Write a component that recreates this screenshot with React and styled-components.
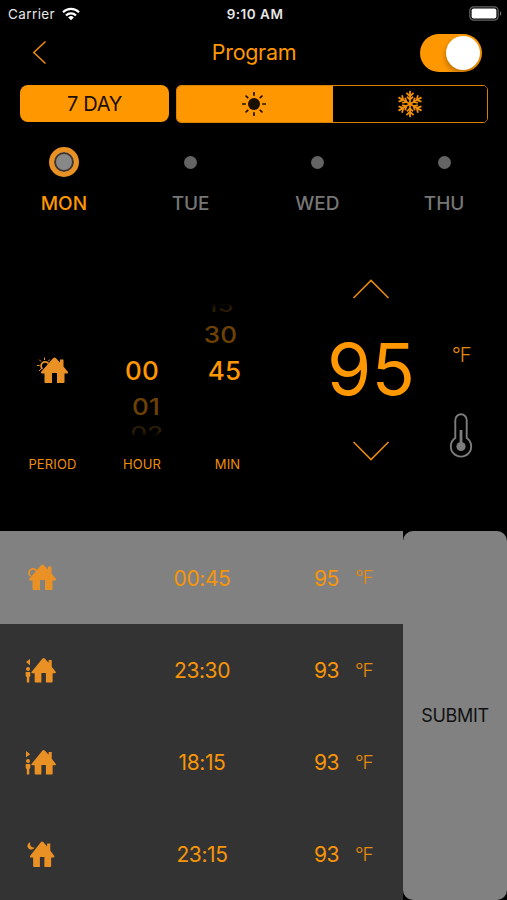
import React, { useState } from 'react';
import styled, { createGlobalStyle } from 'styled-components';

const ORANGE = '#ff9800';
const ICON = '#e99124';

const GlobalStyle = createGlobalStyle`
  * {
    box-sizing: border-box;
  }

  body {
    margin: 0;
    background-color: #000;
    font-family: Inter, sans-serif;
  }

  button {
    border: 0;
    padding: 0;
    background: none;
    font-family: inherit;
    cursor: pointer;
  }

  svg {
    display: block;
  }
`;

const Screen = styled.div`
  width: 507px;
  height: 900px;
  display: flex;
  flex-direction: column;
  overflow: hidden;
  background-color: #000;
  color: ${ORANGE};
`;

const StatusBar = styled.div`
  height: 28px;
  padding: 0 5px 0 8px;
  display: grid;
  grid-template-columns: 1fr 60px 1fr;
  align-items: center;
  color: #e6e6e6;
`;

const Carrier = styled.div`
  display: flex;
  align-items: center;
  gap: 7px;
  font-size: 13.5px;
  letter-spacing: 0.4px;
`;

const Clock = styled.div`
  font-size: 13.5px;
  font-weight: 600;
  letter-spacing: 0.5px;
  text-align: center;
  white-space: nowrap;
`;

const BatteryBox = styled.div`
  display: flex;
  justify-content: flex-end;
  padding-bottom: 2px;
`;

const Header = styled.div`
  height: 49px;
  padding: 0 25px 0 32px;
  display: grid;
  grid-template-columns: 1fr 100px 1fr;
  align-items: center;
`;

const Back = styled.button`
  justify-self: start;
  padding-bottom: 1px;
`;

const Title = styled.h1`
  margin: 0 3px 2px -3px;
  font-size: 21.5px;
  font-weight: 400;
  text-align: center;
  letter-spacing: -0.3px;
`;

const Toggle = styled.button`
  justify-self: end;
  width: 62px;
  height: 38px;
  padding: 0 2px;
  border-radius: 19px;
  display: flex;
  align-items: center;
  justify-content: ${props => props.$on ? 'flex-end' : 'flex-start'};
  background-color: ${props => props.$on ? ORANGE : '#555'};
`;

const Knob = styled.span`
  width: 34px;
  height: 34px;
  border-radius: 50%;
  background-color: #fff;
  box-shadow: -1px 3px 5px rgba(0, 0, 0, 0.25);
`;

const Modes = styled.div`
  display: flex;
  align-items: flex-start;
  gap: 7px;
  padding: 8px 19px 0 20px;
`;

const DayButton = styled.button`
  width: 149px;
  height: 37px;
  border-radius: 8px;
  background-color: ${ORANGE};
  color: #1a0f00;
  font-size: 20px;
  letter-spacing: -0.3px;
`;

const Segment = styled.div`
  flex: 1;
  height: 38px;
  display: flex;
  border: 1px solid #d98100;
  border-radius: 5px;
  overflow: hidden;
`;

const SegmentItem = styled.button`
  flex: 1;
  display: flex;
  align-items: center;
  justify-content: center;
  padding-right: ${props => props.$active ? 3 : 1}px;
  background-color: ${props => props.$active ? ORANGE : '#000'};
  color: ${props => props.$active ? '#1a0f00' : '#ef8f08'};
`;

const Days = styled.div`
  height: 97px;
  padding-top: 23px;
  display: grid;
  grid-template-columns: repeat(4, 1fr);
`;

const Day = styled.button`
  display: flex;
  flex-direction: column;
  align-items: center;
  gap: 15px;
  padding-left: 1px;
  height: 71px;
  font-size: 19px;
  line-height: 22px;
  font-weight: 500;
  letter-spacing: 0;
  color: ${props => props.$active ? ORANGE : '#777'};
`;

const DotBox = styled.span`
  height: 32px;
  display: flex;
  align-items: center;
`;

const Dot = styled.span`
  width: ${props => props.$active ? 30 : 13}px;
  height: ${props => props.$active ? 30 : 13}px;
  border-radius: 50%;
  border: ${props => props.$active ? `5px solid ${ICON}` : '0'};
  background-color: ${props => props.$active ? '#888' : '#646464'};
  box-shadow: ${props => props.$active ? 'inset 0 0 0 2px #40352a' : 'none'};
`;

const Settings = styled.div`
  height: 311px;
  padding-top: 58px;
  display: grid;
  grid-template-columns: 105px 74px 91px 54px 94px 89px;
`;

const Picker = styled.div`
  display: flex;
  flex-direction: column;
  align-items: center;
`;

const Wheel = styled.div`
  height: 162px;
  width: 100%;
  padding-top: 15px;
  display: grid;
  grid-template-rows: 23px 36px 37px 34px 17px;
  justify-items: center;
  align-items: center;
`;

const Current = styled.span`
  font-size: 26px;
  line-height: 26px;
  font-weight: 500;
  letter-spacing: 0.2px;
`;

const Near = styled(Current)`
  color: #6f4203;
  transform: translate(${props => props.$shift}px, 1px) scaleY(0.86);
`;

// last value on the wheel, fading out towards its end
const Far = styled(Current)`
  color: #2c1c07;
  transform: translate(${props => props.$shift}px, ${props => props.$top ? 1 : 2}px) scaleY(0.7);
  mask-image: linear-gradient(
    ${props => props.$top ? 'to top' : 'to bottom'},
    #000 35%,
    transparent 65%
  );
`;

const PickerLabel = styled.span`
  margin-top: 15px;
  font-size: 13px;
  line-height: 18px;
  letter-spacing: 0.15px;
  color: #ef8f08;
  transform: translateX(${props => props.$shift || 0}px);
`;

const Temperature = styled.div`
  display: flex;
  flex-direction: column;
  align-items: center;
  padding-top: 1px;
`;

const Degrees = styled.div`
  height: 142px;
  line-height: 141px;
  font-size: 71.5px;
  letter-spacing: 0;
  margin-right: 0;
`;

const UnitColumn = styled.div`
  display: flex;
  flex-direction: column;
  align-items: center;
  justify-content: space-between;
  height: 180px;
  padding: 65px 3px 0 0;
`;

const UnitText = styled.span`
  font-size: ${props => props.$size || 20}px;
  line-height: 24px;
  font-weight: 300;
  letter-spacing: -1.2px;
  color: #e58a0c;
`;

const Bottom = styled.div`
  flex: 1;
  display: flex;
`;

const List = styled.div`
  width: 403px;
  display: grid;
  grid-template-rows: 93px 92px 92px 92px;
`;

const Row = styled.div`
  padding: 1px 0 0 25px;
  display: grid;
  grid-template-columns: 32px 258px 40px 48px;
  align-items: center;
  background-color: ${props => props.$active ? '#818181' : '#333'};
  color: #f79509;
  font-size: 21px;
`;

const Time = styled.span`
  text-align: center;
  letter-spacing: -0.4px;
  padding-left: 32px;
`;

const RowTemp = styled.span`
  margin-left: -1px;
  letter-spacing: -0.6px;
`;

const Submit = styled.button`
  flex: 1;
  border-radius: 10px;
  background-color: #818181;
  color: #111;
  font-size: 18px;
  letter-spacing: -0.35px;
`;

function Wifi() {
  return (
    <svg width="18" height="14" viewBox="0 0 18 14" fill="none" stroke="#fff" strokeWidth="2.2">
      <path d="M1 5.2a11.4 11.4 0 0 1 16 0" />
      <path d="M4 8.4a7 7 0 0 1 10 0" />
      <path d="M9 13.2 6.2 10.4a4 4 0 0 1 5.6 0z" fill="#fff" stroke="none" />
    </svg>
  );
}

function Battery() {
  return (
    <svg width="33" height="15" viewBox="0 0 33 15">
      <rect x="0.8" y="0.8" width="28.4" height="13.4" rx="4" fill="none" stroke="#666" strokeWidth="1.2" />
      <rect x="2.6" y="2.6" width="24.8" height="9.8" rx="2" fill="#fff" />
      <path d="M31 5.2c1.6.6 1.6 4 0 4.6z" fill="#777" />
    </svg>
  );
}

function Sun() {
  return (
    <svg width="26" height="26" viewBox="0 0 26 26" stroke="currentColor" strokeWidth="1.7">
      <circle cx="13" cy="13" r="6" fill="currentColor" stroke="none" />
      {[0, 45, 90, 135, 180, 225, 270, 315].map(angle => (
        <path key={angle} d="M13 4.8V1" transform={`rotate(${angle} 13 13)`} />
      ))}
    </svg>
  );
}

function Snowflake() {
  return (
    <svg width="28" height="28" viewBox="0 0 28 28" fill="none" stroke="currentColor" strokeWidth="1.8">
      {[0, 60, 120, 180, 240, 300].map(angle => (
        <path key={angle} d="M14 14V.7M10.4 2.8 14 6.2 17.6 2.8M11 6.7 14 9.8 17 6.7" transform={`rotate(${angle} 14 14)`} />
      ))}
    </svg>
  );
}

function Chevron({ d, width, height }) {
  return (
    <svg width={width} height={height} viewBox={`0 0 ${width} ${height}`} fill="none" stroke="#e58a0c" strokeWidth="1.6">
      <path d={d} />
    </svg>
  );
}

function Thermometer() {
  return (
    <svg width="24" height="45" viewBox="0 0 24 45" fill="none" stroke="#7d7d7d">
      <path d="M6.3 25V7a5.7 5.7 0 0 1 11.4 0v18a10.2 10.2 0 1 1-11.4 0z" strokeWidth="1.9" />
      <path d="M12 17v17" strokeWidth="2.8" />
      <circle cx="12" cy="33.5" r="4.6" fill="#7d7d7d" stroke="none" />
    </svg>
  );
}

const HOUSE = 'M0 14.5 12 .8q1.5-1.6 3 0L19 5V2h3.5v7L27 14.5q.4 1.5-1 1.5h-2.5v8.5q0 1-1 1H16V15.5h-5v10H4.5q-1 0-1-1V16H1q-1.4 0-1-1.5z';

function HouseIcon({ kind, rays }) {
  const away = kind === 'leave' || kind === 'return';
  return (
    <svg width="32" height="28" viewBox="0 0 32 28" fill={ICON}>
      <path d={HOUSE} transform={away ? 'translate(6.5 1) scale(.9 .96)' : kind === 'sleep' ? 'translate(5 .5) scale(.9 1)' : 'translate(4 .5)'} />
      {kind === 'wake' && (
        <g fill="none" stroke={ICON}>
          <path d="M5.5 12A4.1 4.1 0 1 1 11.5 6.5" strokeWidth="1.8" />
          {rays && <path d="M7.5 3V.5M4 4.5 2.3 2.7M2.6 8.5H0M4 12 2 14M11 4.5l1.7-2" strokeWidth="1" />}
        </g>
      )}
      {away && (
        <g>
          <path d={kind === 'leave' ? 'M1 5 5 2v6.3z' : 'M5.2 5.2 1 2v6.3z'} />
          <circle cx="3" cy="12" r="2" />
          <path d="M.7 15h4.6v4.2l-1 .8v5.5H1.8V20l-1.1-.8z" />
        </g>
      )}
      {kind === 'sleep' && <path d="M5.3 1.3A3.7 3.7 0 1 0 9.5 6.5 3.8 3.8 0 0 1 5.3 1.3z" />}
    </svg>
  );
}

const days = ['MON', 'TUE', 'WED', 'THU'];

const periods = [
  { kind: 'wake', time: '00:45', temp: 95 },
  { kind: 'leave', time: '23:30', temp: 93 },
  { kind: 'return', time: '18:15', temp: 93 },
  { kind: 'sleep', time: '23:15', temp: 93 },
];

function App() {
  const [on, setOn] = useState(true);
  const [mode, setMode] = useState('heat');
  const [day, setDay] = useState('MON');
  const [temp, setTemp] = useState(95);

  return <>
    <GlobalStyle />
    <Screen>
      <StatusBar>
        <Carrier>Carrier <Wifi /></Carrier>
        <Clock>9:10 AM</Clock>
        <BatteryBox><Battery /></BatteryBox>
      </StatusBar>

      <Header>
        <Back aria-label="Back"><Chevron width={15} height={25} d="M13.5 1.5 1.8 12.5 13.5 23.5" /></Back>
        <Title>Program</Title>
        <Toggle $on={on} aria-label="Power" onClick={() => setOn(!on)}><Knob /></Toggle>
      </Header>

      <Modes>
        <DayButton>7 DAY</DayButton>
        <Segment>
          <SegmentItem $active={mode === 'heat'} aria-label="Heat" onClick={() => setMode('heat')}><Sun /></SegmentItem>
          <SegmentItem $active={mode === 'cool'} aria-label="Cool" onClick={() => setMode('cool')}><Snowflake /></SegmentItem>
        </Segment>
      </Modes>

      <Days>
        {days.map(name => (
          <Day key={name} $active={day === name} onClick={() => setDay(name)}>
            <DotBox><Dot $active={day === name} /></DotBox>
            {name}
          </Day>
        ))}
      </Days>

      <Settings>
        <Picker>
          <Wheel>
            <span />
            <span />
            <HouseIcon kind="wake" rays />
          </Wheel>
          <PickerLabel>PERIOD</PickerLabel>
        </Picker>
        <Picker>
          <Wheel>
            <span />
            <span />
            <Current>00</Current>
            <Near $shift={4}>01</Near>
            <Far $shift={5}>02</Far>
          </Wheel>
          <PickerLabel>HOUR</PickerLabel>
        </Picker>
        <Picker>
          <Wheel>
            <Far $top $shift={-4}>15</Far>
            <Near $shift={-4}>30</Near>
            <Current>45</Current>
          </Wheel>
          <PickerLabel $shift={3}>MIN</PickerLabel>
        </Picker>
        <span />
        <Temperature>
          <button aria-label="Warmer" onClick={() => setTemp(temp + 1)}><Chevron width={38} height={20} d="M1.5 19 19 1.5 36.5 19" /></button>
          <Degrees>{temp}</Degrees>
          <button aria-label="Colder" onClick={() => setTemp(temp - 1)}><Chevron width={38} height={20} d="M1.5 1 19 18.5 36.5 1" /></button>
        </Temperature>
        <UnitColumn>
          <UnitText>°F</UnitText>
          <Thermometer />
        </UnitColumn>
      </Settings>

      <Bottom>
        <List>
          {periods.map((item, index) => (
            <Row key={item.kind} $active={index === 0}>
              <HouseIcon kind={item.kind} />
              <Time>{item.time}</Time>
              <RowTemp>{item.temp}</RowTemp>
              <UnitText $size={19}>°F</UnitText>
            </Row>
          ))}
        </List>
        <Submit>SUBMIT</Submit>
      </Bottom>
    </Screen>
  </>
}

export default App;
